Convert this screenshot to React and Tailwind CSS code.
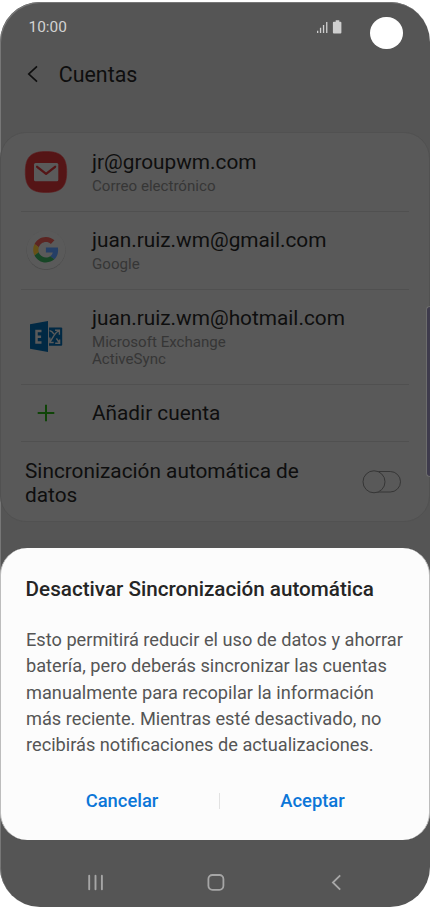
const accounts = [
  { name: 'jr@groupwm.com', type: ['Correo electrónico'], Icon: MailIcon, height: 'h-[78px]' },
  { name: 'juan.ruiz.wm@gmail.com', type: ['Google'], Icon: GoogleIcon, height: 'h-[78px]' },
  { name: 'juan.ruiz.wm@hotmail.com', type: ['Microsoft Exchange', 'ActiveSync'], Icon: ExchangeIcon, height: 'h-[95px]' },
];

const message = [
  'Esto permitirá reducir el uso de datos y ahorrar',
  'batería, pero deberás sincronizar las cuentas',
  'manualmente para recopilar la información',
  'más reciente. Mientras esté desactivado, no',
  'recibirás notificaciones de actualizaciones.',
];

function MailIcon() {
  return (
    <svg width="44" height="44" viewBox="0 0 44 44" className="-mt-[2px]">
      <path d="M22 1.5C37 1.5 42.7 7 42.7 22S37 42.5 22 42.5 1.3 37 1.3 22 7 1.5 22 1.5Z" fill="#551516" stroke="#5f1f20" strokeWidth="0.6" />
      <rect x="10" y="13" width="24.3" height="18.2" rx="1.5" fill="#5a5a5a" />
      <path d="M13.1 16.8l9 7 9-7" fill="none" stroke="#551516" strokeWidth="2.3" strokeLinecap="round" strokeLinejoin="round" />
    </svg>
  );
}

function GoogleIcon() {
  return (
    <svg width="44" height="44" viewBox="0 0 44 44" className="-mt-[2px]">
      <circle cx="22" cy="22.5" r="19.4" fill="#4a4a4a" />
      <circle cx="22" cy="21.8" r="19.4" fill="#5a5a5a" />
      <g transform="translate(9.2 9) scale(0.53)">
        <path fill="#5c2522" d="M24 9.5c3.54 0 6.71 1.22 9.21 3.6l6.85-6.85C35.9 2.38 30.47 0 24 0 14.62 0 6.51 5.38 2.56 13.22l7.98 6.19C12.43 13.72 17.74 9.5 24 9.5z" />
        <path fill="#253f66" d="M46.98 24.55c0-1.57-.15-3.09-.38-4.55H24v9.02h12.94c-.58 2.96-2.26 5.48-4.78 7.18l7.73 6c4.51-4.18 7.09-10.36 7.09-17.65z" />
        <path fill="#665116" d="M10.53 28.59A14.5 14.5 0 0 1 9.77 24c0-1.6.27-3.14.76-4.59l-7.98-6.19A23.9 23.9 0 0 0 0 24c0 3.88.92 7.54 2.56 10.78l7.97-6.19z" />
        <path fill="#174626" d="M24 48c6.48 0 11.93-2.13 15.89-5.81l-7.73-6c-2.15 1.45-4.92 2.3-8.16 2.3-6.26 0-11.57-4.22-13.47-9.91l-7.98 6.19C6.51 42.62 14.62 48 24 48z" />
      </g>
    </svg>
  );
}

function ExchangeIcon() {
  return (
    <svg width="44" height="44" viewBox="0 0 44 44" className="-mt-px">
      <path d="M6 9.2 24 6v31L6 33.8Z" fill="#012944" />
      <path d="M17.5 15.9h-5v11.6h5M12.5 21.7h4.6" fill="none" stroke="#5a5a5a" strokeWidth="2.5" />
      <path d="M25 12.4h12.2a1 1 0 0 1 1 1v16.4a1 1 0 0 1-1 1H25Z" fill="#012944" />
      {/* crossing arrows */}
      <path
        d="M25.6 15.6c2 .2 3.2 1.7 4.4 3.6M31 15.3h4.4v4.4M35.2 15.6c-4 1-6.6 8-9.6 11.8M32.4 23.4c1 2 2 3.4 3.6 4.2M25.8 22.6v4.9h3.9M31.2 28.2h4.4v-3.6"
        fill="none" stroke="#5a5a5a" strokeWidth="1.4"
      />
    </svg>
  );
}

function StatusBar() {
  return (
    <div className="flex h-[51px] items-center justify-between pl-[28.5px] pr-[27.3px]">
      <span className="pt-px text-[15.4px] text-[#d2d2d2]">10:00</span>
      <div className="flex items-center">
        <svg width="28" height="16" viewBox="0 0 28 16" fill="#cfcfcf" className="mr-[26.8px]">
          <path d="M1 11.7h1.3V14H1zM3.9 8.8h1.3V14H3.9zM6.9 6h1.3v8H6.9zM10.1 3h1.3v11h-1.3z" />
          <path d="M19.7 1.2h3.6V2.7h1.1a1 1 0 0 1 1 1V13.4a1 1 0 0 1-1 1h-6.5a1 1 0 0 1-1-1V3.7a1 1 0 0 1 1-1h1.8Z" />
        </svg>
        <div className="mt-[11px] h-[32.4px] w-[32.4px] rounded-full bg-white" />
      </div>
    </div>
  );
}

function NavBar() {
  return (
    <div className="grid h-[67px] grid-cols-3 items-center px-[35px] pt-[17px]">
      <svg className="mx-auto" width="20" height="20" viewBox="0 0 20 20" fill="none" stroke="#a6a6a6" strokeWidth="1.9" strokeLinecap="round">
        <path d="M4.2 3.8v13.4M10.5 3.8v13.4M16.9 3.8v13.4" />
      </svg>
      <svg className="mx-auto" width="20" height="20" viewBox="0 0 20 20" fill="none" stroke="#a6a6a6" strokeWidth="1.8">
        <rect x="3.4" y="3" width="15" height="14.8" rx="4" />
      </svg>
      <svg className="mx-auto" width="20" height="20" viewBox="0 0 20 20" fill="none" stroke="#a6a6a6" strokeWidth="1.8">
        <path d="M15.2 3.3 7.9 10.5l7.3 7.2" />
      </svg>
    </div>
  );
}

function Dialog() {
  return (
    <div className="flex h-[292px] flex-col rounded-[27px] border-x border-[#bdbdbd] bg-[#fcfcfc] pl-[25px]">
      <h2 className="mt-[29px] -ml-[0.4px] text-[20.65px] font-medium leading-6 text-[#252525] whitespace-nowrap">
        Desactivar Sincronización automática
      </h2>
      <p className="mt-[26px] text-[18.2px] leading-[26.3px] text-[#555] whitespace-nowrap">
        {message.map(line => <span key={line} className="block">{line}</span>)}
      </p>
      <div className="mt-[31px] flex items-center pr-6 text-[18.4px] font-medium leading-6 text-[#0b76d8]">
        <button className="w-[192px]">Cancelar</button>
        <div className="ml-px h-4 w-px bg-[#e2e2e2]" />
        <button className="flex-1">Aceptar</button>
      </div>
    </div>
  );
}

export default function App() {
  return (
    <div className="h-[907px] w-[430px] overflow-hidden bg-white pt-[2px] font-[Roboto,sans-serif]">
      <div className="relative flex h-[905px] flex-col overflow-hidden rounded-[40px] bg-[#555] shadow-[inset_1px_1px_0_#777]">
        <StatusBar />

        <div className="flex h-[44px] items-center pl-[26px]">
          <svg width="14" height="18" viewBox="0 0 14 18" fill="none" stroke="#0e0e0e" strokeWidth="1.7" className="-mt-[2px]">
            <path d="M11 1.4 2.8 9l8.2 7.6" />
          </svg>
          <h1 className="ml-[18.8px] pt-px text-[21.4px] text-[#0e0e0e]">Cuentas</h1>
        </div>

        {/* Accounts card */}
        <div className="mt-[35px] h-[390px] rounded-[26px] border border-[#515151] bg-[#595959] pt-px">
          {accounts.map(({ name, type, Icon, height }) => (
            <div key={name} className={`mx-5 flex items-center border-b border-[#505050] pl-[3px] ${height}`}>
              <Icon />
              <div className="ml-6 whitespace-nowrap">
                <div className="text-[20.8px] leading-6 text-[#0e0e0e]">{name}</div>
                <div className="mt-1 text-[15.1px] leading-[17.5px] text-[#363636]">
                  {type.map(line => <div key={line}>{line}</div>)}
                </div>
              </div>
            </div>
          ))}
          <div className="mx-5 flex h-[57px] items-center border-b border-[#505050] pl-[3px]">
            <svg width="44" height="44" viewBox="0 0 44 44" stroke="#0f4407" strokeWidth="2">
              <path d="M22 13.7v16.6M13.7 22h16.6" />
            </svg>
            <span className="ml-6 pt-px text-[20.8px] text-[#0e0e0e]">Añadir cuenta</span>
          </div>
          <div className="flex h-[79px] items-center justify-between pl-6 pr-[26px]">
            <span className="pt-[2px] text-[20.8px] leading-6 text-[#0e0e0e] whitespace-nowrap">Sincronización automática de<br />datos</span>
            <svg width="42" height="26" viewBox="0 0 42 26" fill="#595959" stroke="#363636">
              <rect x="2.5" y="2.5" width="37" height="20.5" rx="10.25" />
              <circle cx="13" cy="12.8" r="11" />
            </svg>
          </div>
        </div>

        <div className="mt-[26px]">
          <Dialog />
        </div>
        <NavBar />

        {/* Edge panel handle */}
        <div className="absolute right-0 top-[304px] h-[171px] w-[4px] rounded-l-[4px] border-y border-l border-[#6c6c6c] bg-[#3e3b4c]" />
      </div>
    </div>
  );
}
